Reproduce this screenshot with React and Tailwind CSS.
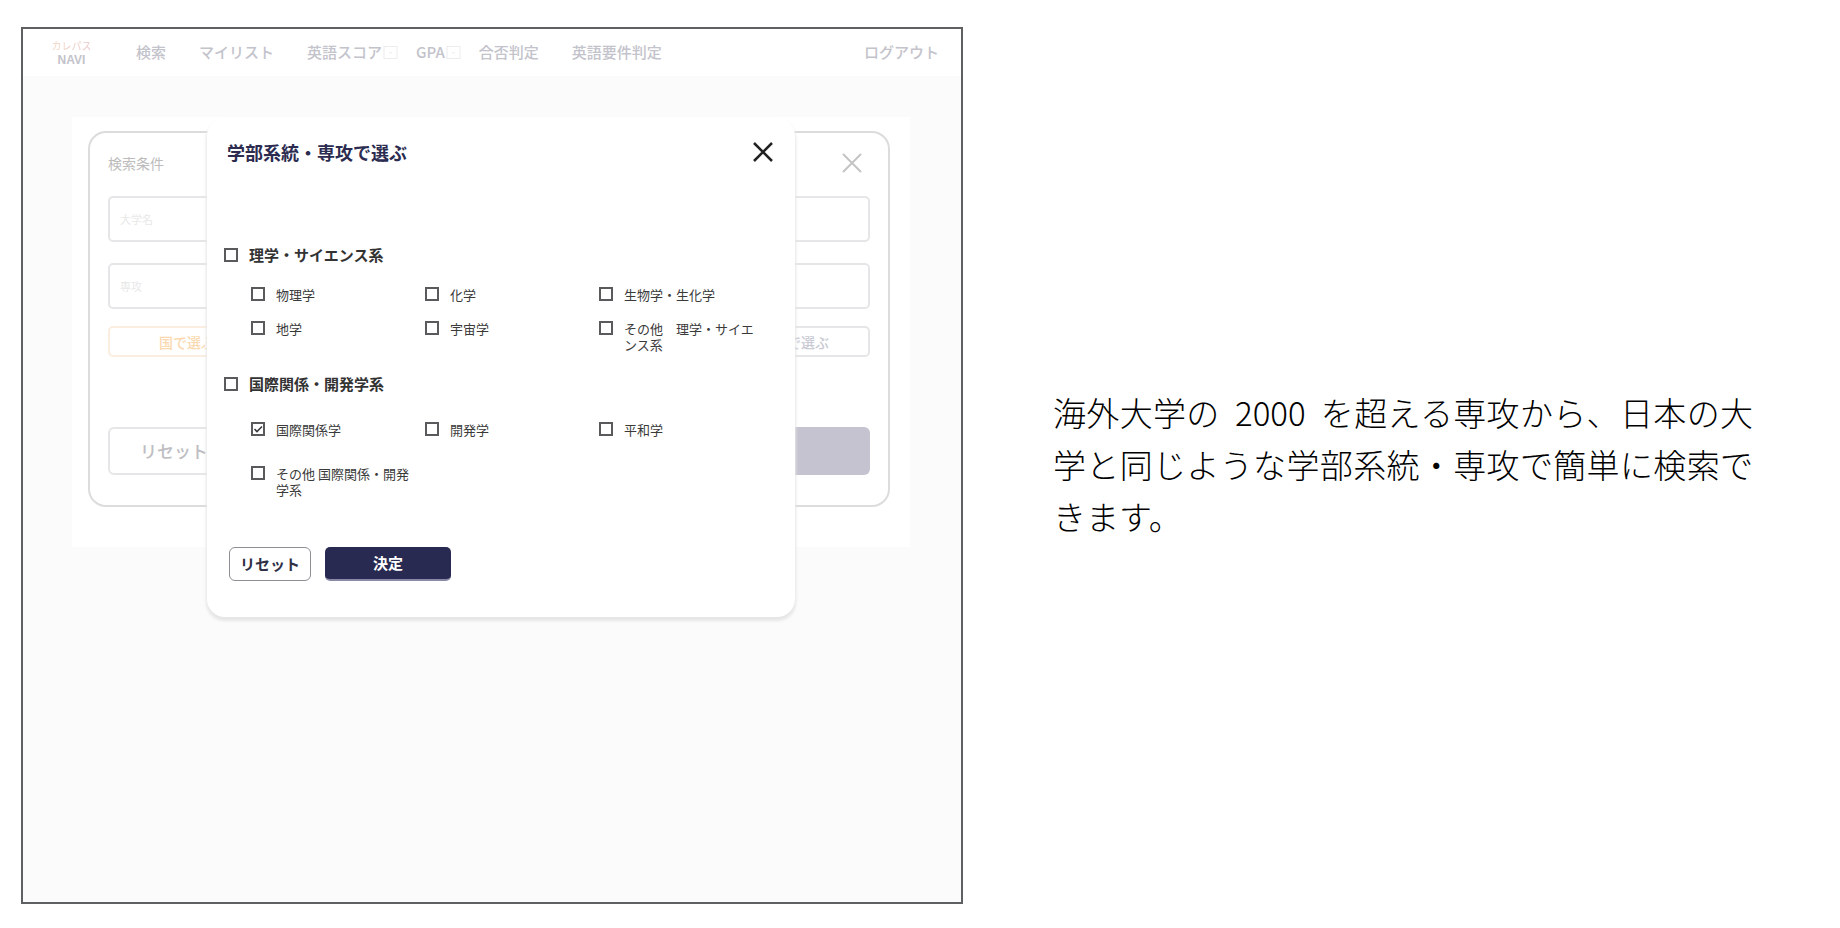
import { useState } from "react";

const NAV = [
  { label: "検索" },
  { label: "マイリスト" },
  { label: "英語スコア", menu: true },
  { label: "GPA", menu: true },
  { label: "合否判定" },
  { label: "英語要件判定" },
];

const GROUPS = [
  {
    title: "理学・サイエンス系",
    grid: "mt-[22px] gap-y-[18px]",
    items: ["物理学", "化学", "生物学・生化学", "地学", "宇宙学", "その他　理学・サイエンス系"],
  },
  {
    title: "国際関係・開発学系",
    grid: "mt-[28px] gap-y-[28px]",
    items: ["国際関係学", "開発学", "平和学", "その他 国際関係・開発学系"],
  },
];

const Cross = ({ className }) => (
  <svg viewBox="0 0 20 20" fill="none" stroke="currentColor" className={className}>
    <path d="M1 1l18 18M19 1L1 19" />
  </svg>
);

const Checkbox = ({ checked, onChange }) => (
  <span className="grid size-[14px] shrink-0 place-items-center">
    <input
      type="checkbox"
      checked={checked}
      onChange={onChange}
      className="col-start-1 row-start-1 size-[14px] appearance-none border-2 border-[#5a5a5c] bg-white"
    />
    {checked && (
      <svg
        viewBox="0 0 14 14"
        fill="none"
        stroke="#3c3c3e"
        strokeWidth="1.6"
        className="pointer-events-none col-start-1 row-start-1 size-[14px]"
      >
        <path d="M3.5 7l2.5 2.5 5-5" />
      </svg>
    )}
  </span>
);

const Header = () => (
  <header className="flex h-[47px] items-center bg-white pl-[26px] pr-[22px] text-[15px] font-medium text-[#c3c3cb]">
    <a href="#" className="flex w-[45px] flex-col items-center">
      <span className="whitespace-nowrap bg-linear-to-r from-[#f3dccb] to-[#ecd0d4] bg-clip-text text-[10px] leading-[15px] text-transparent">
        カレパス
      </span>
      <span className="font-['Liberation_Sans',sans-serif] text-xs font-bold leading-[14px]">NAVI</span>
    </a>
    <nav className="flex flex-1 items-center pl-[42px]">
      {NAV.map(({ label, menu }) => (
        <a
          key={label}
          href="#"
          className={`flex items-center gap-[1px] whitespace-nowrap ${menu ? "mr-[18px]" : "mr-[33px]"}`}
        >
          {label}
          {menu && (
            <svg viewBox="0 0 15 15" fill="none" stroke="#ececef" className="size-[15px]">
              <rect x="1" y="1.5" width="13" height="12" />
              <path d="M6 7l1.5 1.5L9 7" />
            </svg>
          )}
        </a>
      ))}
    </nav>
    <a href="#" className="whitespace-nowrap">
      ログアウト
    </a>
  </header>
);

const SearchCard = () => (
  <section className="ml-[49px] mr-[51px] mt-[41px] bg-white pb-10 pl-4 pr-5 pt-[14px]">
    <div className="rounded-[18px] border-2 border-[#dcdcdc] px-[18px] pb-[30px] pt-5">
      <div className="flex h-5 items-center justify-between pr-2">
        <h2 className="text-sm text-[#bcbcbc]">検索条件</h2>
        <button type="button" aria-label="検索条件を閉じる" className="text-[#c4c4c4]">
          <Cross className="size-5 stroke-2" />
        </button>
      </div>
      <input
        type="text"
        aria-label="大学名"
        placeholder="大学名"
        className="mt-[23px] block h-[46px] w-full rounded-[5px] border-2 border-[#e6e6e8] px-[10px] text-[11px] placeholder:text-[#e8e8e8]"
      />
      <input
        type="text"
        aria-label="専攻"
        placeholder="専攻"
        className="mt-[21px] block h-[46px] w-full rounded-[5px] border-2 border-[#e6e6e8] px-[10px] text-[11px] placeholder:text-[#e8e8e8]"
      />
      <div className="mt-[17px] flex justify-between text-sm font-medium">
        <button type="button" className="h-[31px] w-[158px] rounded-[5px] border-2 border-[#fbeee0] text-[#fbd9b0]">
          国で選ぶ
        </button>
        <button type="button" className="h-[31px] w-[152px] rounded-[5px] border-2 border-[#e6e6e8] text-[#c9c9d3]">
          専攻で選ぶ
        </button>
      </div>
      <div className="mt-[70px] flex gap-3">
        <button type="button" className="h-12 w-[132px] rounded-[6px] border-2 border-[#e6e6e8] text-[17px] font-medium text-[#bdbdc2]">
          リセット
        </button>
        <button type="button" className="h-12 flex-1 rounded-[6px] bg-[#c4c3cf] text-[17px] font-medium text-white">
          検索
        </button>
      </div>
    </div>
  </section>
);

const MajorDialog = () => {
  const [selected, setSelected] = useState(["国際関係学"]);

  const toggle = (name) =>
    setSelected((prev) =>
      prev.includes(name) ? prev.filter((n) => n !== name) : [...prev, name]
    );

  return (
    <div
      role="dialog"
      aria-label="学部系統・専攻で選ぶ"
      className="absolute left-[184px] right-[166px] top-[89px] rounded-[18px] bg-white pb-9 pl-[17px] pr-[22px] pt-[21px] shadow-[0_3px_3px_1px_#e6e6e6]"
    >
      <div className="flex h-[26px] items-center justify-between pl-[3px]">
        <h1 className="text-lg font-bold text-[#2b2c50]">学部系統・専攻で選ぶ</h1>
        <button type="button" aria-label="閉じる" className="text-[#222]">
          <Cross className="size-5 stroke-[2.5]" />
        </button>
      </div>

      <div className="mt-20 flex flex-col gap-[21px]">
        {GROUPS.map(({ title, grid, items }) => (
          <section key={title}>
            <label className="flex h-5 items-center gap-[11px] text-[15px] font-bold text-[#333]">
              <Checkbox checked={selected.includes(title)} onChange={() => toggle(title)} />
              {title}
            </label>
            <div className={`grid grid-cols-3 pl-[27px] ${grid}`}>
              {items.map((item) => (
                <label key={item} className="flex items-start gap-[11px] pr-[10px] text-[13px] leading-4 text-[#3a3a3a]">
                  <Checkbox checked={selected.includes(item)} onChange={() => toggle(item)} />
                  {item}
                </label>
              ))}
            </div>
          </section>
        ))}
      </div>

      <div className="mt-[49px] flex gap-[14px] pl-[5px] text-[15px] font-bold">
        <button type="button" className="h-[34px] w-[82px] rounded-[6px] border border-[#8e8e96] text-[#2f3046]">
          リセット
        </button>
        <button
          type="button"
          className="h-[34px] w-[126px] rounded-[5px] border-b-2 border-[#8a8aa8] bg-[#292a51] text-white"
        >
          決定
        </button>
      </div>
    </div>
  );
};

const App = () => {
  return (
    <main
      lang="ja"
      className="grid min-h-screen grid-cols-[942fr_877fr] bg-white pb-6 pl-[21px] pt-[27px] font-['Noto_Sans_CJK_JP',sans-serif]"
    >
      <div className="relative border-2 border-[#5f6062] bg-[#fbfbfb]">
        <Header />
        <SearchCard />
        <MajorDialog />
      </div>

      <p className="self-center pb-1 pl-[90px] pr-[87px] text-justify text-[33px] font-light leading-[52px] text-black">
        海外大学の&nbsp; 2000 &nbsp;を超える専攻から、日本の大学と同じような学部系統・専攻で簡単に検索できます。
      </p>
    </main>
  );
};

export default App;
